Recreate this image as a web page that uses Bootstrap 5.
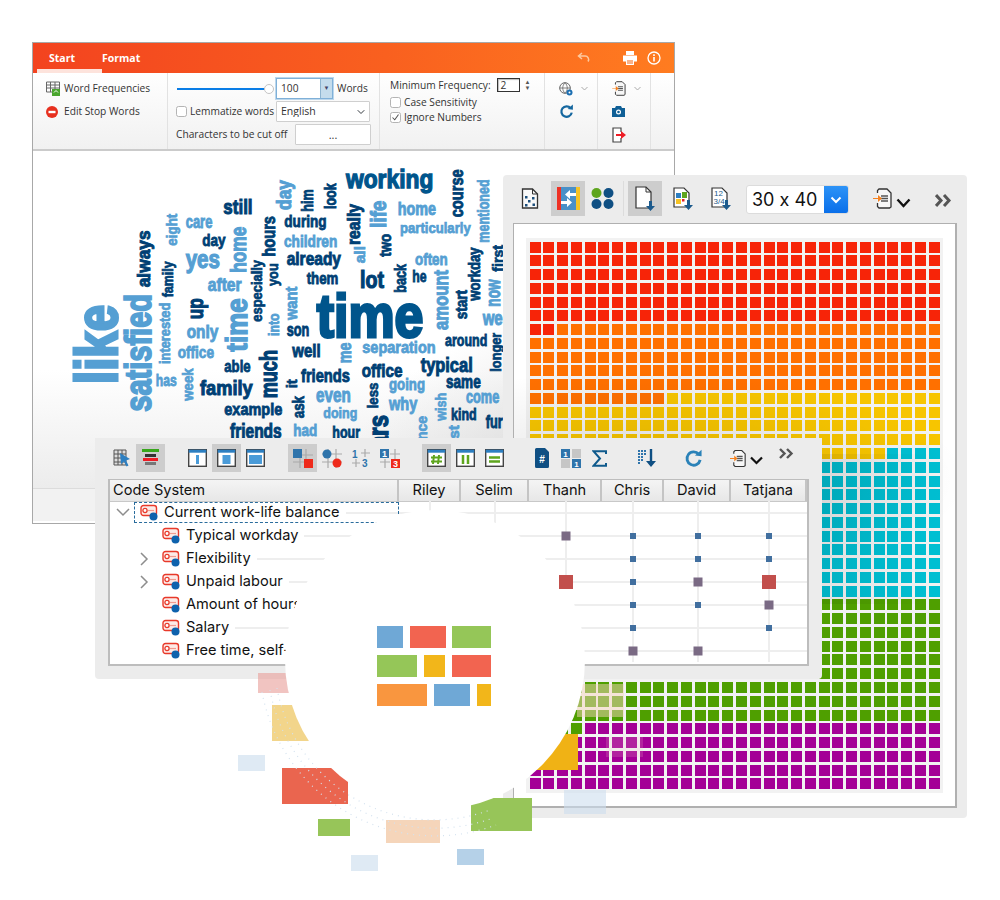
<!doctype html>
<html lang="en">
<head>
    <meta charset="utf-8">
    <meta name="viewport" content="width=device-width, initial-scale=1">
    <title>Word cloud, document portrait and code matrix</title>
    <link href="https://cdn.jsdelivr.net/npm/bootstrap@5.3.3/dist/css/bootstrap.min.css" rel="stylesheet">
    <style>
        body { margin: 0; background: #fff; }
        .desk { width: 1000px; height: 900px; overflow: hidden; }
        .ink-deep { color: #15679f; }
        .ink-soft { color: #2b82b8; }

        /* word cloud window */
        .win-cloud { left: 32px; top: 42px; width: 643px; height: 482px; border: 1px solid #a8a8a8; background: #fff; font: 10.2px/1.2 "Open Sans", sans-serif; color: #333; white-space: nowrap; }
        .title-strip { height: 30px; background: linear-gradient(90deg, #f3431f, #f9601f 55%, #ff7c20); padding-left: 16px; color: #fff; font-weight: 700; font-size: 10.5px; }
        .title-tab { position: relative; width: 53px; }
        .title-tab.on::after { content: ""; position: absolute; left: -12px; right: 0; bottom: 0; height: 4px; background: #fde3dc; }
        .title-tools { gap: 10px; padding-right: 13px; }
        .undo-ico { margin-right: 22px; }
        .ribbon { height: 78px; background: linear-gradient(#fff, #f1f1f1); border-bottom: 2px solid #cbcbcb; }
        .rb-group { border-right: 1px solid #e2e2e2; padding-top: 4px; flex: none; }
        .rb-a { width: 135px; padding-left: 13px; }
        .rb-b { width: 212px; padding-left: 8px; }
        .rb-c { width: 165px; padding-left: 10px; padding-top: 3px; }
        .rb-d { width: 53px; padding-left: 14px; }
        .rb-e { width: 53px; padding-left: 14px; }
        .rb-row { height: 23px; }
        .rb-row-t { height: 18px; }
        .rb-row-m { height: 16px; }
        .rb-row-s { height: 15px; }
        .slider-box { width: 100px; position: relative; height: 10px; }
        .slider-fill { position: absolute; left: 1px; top: 4px; width: 88px; height: 2px; background: #0a7de6; }
        .slider-knob { position: absolute; left: 88px; top: 0; width: 10px; height: 10px; border-radius: 50%; background: #fff; border: 1px solid #c4c4c4; }
        .num-box { width: 57px; height: 21px; border: 1px solid #7fb0d8; box-shadow: 0 0 0 1px #bcd7ec; padding-left: 4px; background: #fff; }
        .num-drop { width: 12px; height: 19px; background: #c4dcec; border-left: 1px solid #8db4d0; font-size: 6px; color: #446; }
        .plain-select { width: 94px; height: 21px; min-height: 0; font-size: 10.5px; line-height: 1; padding: 0 4px; border: 1px solid #cfcfcf; border-radius: 1px; background-position: right 4px center; background-size: 8px 8px; color: #333; }
        .plain-btn { width: 76px; height: 21px; border: 1px solid #cfcfcf; background: #fff; font-size: 11px; padding: 0; border-radius: 1px; color: #333; }
        .lbl-wide { width: 100px; }
        .lbl-chars { width: 119px; }
        .mini-check { width: 11px; height: 11px; margin: 0 3px 0 0 !important; border: 1px solid #b4b4b4; border-radius: 1px; flex: none; }
        .mini-check:checked { background-color: #fff; border-color: #b4b4b4; background-image: url("data:image/svg+xml,%3csvg xmlns='http://www.w3.org/2000/svg' viewBox='0 0 12 12'%3e%3cpath fill='none' stroke='%23555' stroke-width='1.4' d='M2 6l3 3 5-7'/%3e%3c/svg%3e"); }
        .freq-box { width: 23px; height: 14px; border: 1px solid #333; box-shadow: inset 1px 1px 1px #bbb; background: #fff; padding-left: 3px; line-height: 12px; margin-left: 6px; }
        .spin-arrows { font-size: 6px; line-height: 6px; margin-left: 5px; color: #555; }
        .cloud-area { height: 337px; background: radial-gradient(ellipse 330px 190px at 100% 100%, #cfcfcf, rgba(255,255,255,0)), linear-gradient(#fff 65%, #ececec 100%); }
        .cloud-foot { height: 33px; background: #f2f2f2; border-top: 1px solid #dcdcdc; }
        .w-n { fill: #003f74; stroke: #003f74; }
        .w-m { fill: #00558c; stroke: #00558c; }
        .w-l { fill: #559fd3; stroke: #559fd3; }
        .cloud-word { font-family: "Liberation Sans Narrow", "Liberation Sans", sans-serif; font-weight: 700; }

        /* portrait window */
        .win-portrait { left: 503px; top: 175px; width: 464px; height: 643px; background: #ececec; border-radius: 4px; }
        .pt-bar { height: 48px; padding: 6px 0 0 10px; }
        .pt-slot { width: 34px; height: 35px; flex: none; }
        .tile-on { background: #cdcdcd; }
        .pt-sep { width: 1px; height: 35px; background: #dcdcdc; }
        .size-pick { width: 103px; height: 29px; flex: none; background: #fff; border: 1px solid #dcdcdc; border-radius: 3px; overflow: hidden; font: 18px/1 Inter, sans-serif; font-feature-settings: "calt" 0; color: #111; white-space: nowrap; }
        .size-val { flex: 1; padding-left: 5px; }
        .size-btn { width: 24px; height: 100%; flex: none; background: linear-gradient(#2d93f7, #0a6fe9); }
        .pt-frame { position: relative; margin: 0 10px; height: 585px; background: #fff; border: 1px solid #b0b0b0; border-width: 1px 2px 2px 1px; padding: 14px 0 0 12px; }
        .cell-grid { display: grid; grid-template-columns: repeat(30, 11px); grid-auto-rows: 11px; gap: 2.77px; padding: 3.5px; width: max-content; background: #f2f2f2; }
        .c-red { background: #f72408; }
        .c-ora { background: #ff7000; }
        .c-yel { background: #f7c500; }
        .c-cya { background: #00bfd2; }
        .c-gre { background: #4f9f00; }
        .c-pur { background: #a40096; }
        .grid-shade { position: absolute; left: 0; top: 130px; width: 100%; height: 340px; pointer-events: none; background: radial-gradient(ellipse 330px 110px at 28% 37%, rgba(0,0,0,.11), rgba(0,0,0,0)), linear-gradient(90deg, rgba(0,0,0,.07) 70%, rgba(0,0,0,0) 95%) 0 100px / 100% 150px no-repeat; }

        /* matrix window */
        .win-matrix { left: 95px; top: 438px; width: 727px; height: 241px; background: #ececec; border-radius: 0 0 4px 4px; font-family: Inter, sans-serif; color: #111; }
        .mx-bar { height: 41px; padding: 6px 0 0 12px; column-gap: 18px; }
        .mx-slot { width: 29px; height: 28px; flex: none; }
        .mx-table { margin-left: 13px; width: 701px; height: 187px; background: #fff; border: 2px solid #bdbdbd; border-top-width: 1px; }
        .mx-head { height: 22px; background: linear-gradient(#f4f4f4, #e7e7e7); border-bottom: 1px solid #c8c8c8; font-size: 14.6px; line-height: 21px; }
        .mx-cols { display: grid; grid-template-columns: 289px 62px 68px 73px 62px 67px 76px; }
        .mx-head > div { border-right: 2px solid #c4c4c4; text-align: center; }
        .mx-head > div:first-child { text-align: left; padding-left: 3px; }
        .mx-body { margin-top: -1px; }
        .mx-row { height: 23px; font-size: 14.6px; }
        .mx-name { height: 23px; min-width: 0; }
        .mx-name.picked::after { content: ""; position: absolute; left: 24px; right: 0; top: 1px; bottom: 1px; border: 1px dashed #2a6c9c; }
        .mx-rule { flex: 1; height: 2px; background: #eee; margin-left: 6px; }
        .mx-cell { position: relative; }
        .mx-cell::before { content: ""; position: absolute; left: 0; right: 0; top: 11px; height: 2px; background: #eee; }
        .mx-cell::after { content: ""; position: absolute; top: 0; bottom: 0; left: 50%; width: 2px; margin-left: -1px; background: #eee; }
        .mk { position: absolute; left: 50%; top: 12px; transform: translate(-50%, -50%); z-index: 1; }
        .mk-s { width: 6px; height: 6px; background: #416f9f; }
        .mk-g { width: 9px; height: 9px; background: #7a6a84; }
        .mk-r { width: 14px; height: 14px; background: #c24f4c; }
        .tree-gap-0 { width: 30px; flex: none; justify-content: center; padding-right: 4px; }
        .tree-gap-1 { width: 52px; flex: none; justify-content: flex-end; padding-right: 13px; }
        .tree-ico { width: 18px; height: 17px; margin-right: 6px; flex: none; }

        /* drifting pieces and the lens */
        .chip { position: absolute; }
        .chip-pink { left: 258px; top: 673px; width: 50px; height: 20px; background: rgba(233, 165, 160, .65); }
        .chip-sand { left: 272px; top: 705px; width: 50px; height: 36px; background: #f2d58b; }
        .chip-mist1 { left: 238px; top: 755px; width: 27px; height: 16px; background: #dfeaf4; }
        .chip-red { left: 282px; top: 768px; width: 66px; height: 36px; background: #ea654f; }
        .chip-leaf1 { left: 318px; top: 819px; width: 32px; height: 17px; background: #97c559; }
        .chip-peach { left: 386px; top: 820px; width: 54px; height: 23px; background: #f5d5ba; }
        .chip-leaf2 { left: 471px; top: 798px; width: 61px; height: 33px; background: #97c559; }
        .chip-mist2 { left: 351px; top: 855px; width: 27px; height: 16px; background: #dfeaf4; }
        .chip-sky { left: 457px; top: 849px; width: 27px; height: 16px; background: #b5d1e8; }
        .chip-gold { left: 530px; top: 734px; width: 48px; height: 36px; background: #f0b215; }
        .chip-glow { left: 577px; top: 684px; width: 47px; height: 33px; background: rgba(245, 213, 186, .5); }
        .chip-rose { left: 606px; top: 737px; width: 37px; height: 20px; background: rgba(245, 200, 200, .18); }
        .chip-mist3 { left: 564px; top: 790px; width: 42px; height: 24px; background: rgba(205, 222, 238, .6); }
        .halo { position: absolute; left: 0; top: 0; }
        .lens { position: absolute; left: 285px; top: 510px; width: 300px; height: 300px; border-radius: 50%; background: #fff; padding: 116px 0 0 92px; }
        .brick-row { width: 114px; margin-bottom: 7px; height: 22px; }
        .brick-blue { background: #6fa8d6; }
        .brick-red { background: #f26450; }
        .brick-green { background: #95c658; }
        .brick-gold { background: #f2b61a; }
        .brick-orange { background: #f9963f; }
        .b-w14 { width: 14px; }
        .b-w21 { width: 21px; }
        .b-w26 { width: 26px; }
        .b-w36 { width: 36px; }
        .b-w39 { width: 39px; }
        .b-w40 { width: 40px; }
        .b-w50 { width: 50px; }
    </style>
</head>
<body>
<svg width="0" height="0" class="position-absolute">
    <defs>
        <symbol id="i-doc" viewBox="0 0 18 21"><path d="M1.5 1h10l5 5v14h-15z" fill="#f9f9f9" stroke="#333" stroke-width="1.3"/><path d="M11.5 1v5h5" fill="none" stroke="#333"/></symbol>
        <symbol id="i-import" viewBox="0 0 19 21"><path d="M4.5 5V2.5L6 1h8l4 4v14l-1.5 1H6L4.5 18.5V15" fill="#f7f7f7" stroke="#333" stroke-width="1.3"/><path d="M8 8h7M8 10.5h7M8 13h7" stroke="#555" stroke-width="1.6"/><path d="M0 10h5V7l4 3.5-4 3.5v-3H0z" fill="#f58220"/></symbol>
        <symbol id="i-code" viewBox="0 0 18 17"><rect x="1" y="1.5" width="15.5" height="10" rx="2.5" fill="#fdeae7" stroke="#e8392a" stroke-width="1.4"/><circle cx="5" cy="6.5" r="2.1" fill="#fff" stroke="#e8392a" stroke-width="1.3"/><path d="M8 6.5h6" stroke="#f19b90" stroke-width="1.2"/><circle cx="13.5" cy="12.5" r="4" fill="#0e62ad"/></symbol>
        <symbol id="i-redo" viewBox="0 0 20 20"><path d="M15.5 5.5A7 7 0 1 0 17 11.5" fill="none" stroke="currentColor" stroke-width="3"/><path d="M11.5 6.8L18.5 7.5V.8z" fill="currentColor"/></symbol>
    </defs>
</svg>

<div class="desk position-relative">

    <!-- word cloud window -->
    <section class="win-cloud position-absolute">
        <div class="title-strip d-flex align-items-stretch">
            <div class="title-tab on d-flex align-items-center">Start</div>
            <div class="title-tab d-flex align-items-center">Format</div>
            <div class="ms-auto d-flex align-items-center title-tools">
                <svg width="14" height="14" viewBox="0 0 14 14" class="undo-ico"><path d="M5 2L1.5 5 5 8M2 5h6a3.5 3.5 0 0 1 3 5.5" fill="none" stroke="#fcc9a0" stroke-width="1.5"/></svg>
                <svg width="14" height="14" viewBox="0 0 14 14"><path d="M3 0h8v4H3zM0 4.5h14v6h-3V14H3v-3.5H0z" fill="#fff"/><path d="M4 9h6v4H4z" fill="#f9b28a"/></svg>
                <svg width="14" height="14" viewBox="0 0 14 14"><circle cx="7" cy="7" r="6" fill="none" stroke="#fff" stroke-width="1.3"/><path d="M6.2 6h1.6v4.5H6.2zM6.2 3.3h1.6v1.6H6.2z" fill="#fff"/></svg>
            </div>
        </div>
        <div class="ribbon d-flex">
            <div class="rb-group rb-a">
                <div class="rb-row d-flex align-items-center gap-1">
                    <svg width="14" height="15" viewBox="0 0 14 15"><path d="M.5 1h13v10H.5zM.5 4h13M.5 7h13M4.5 1v10M9 1v10" fill="none" stroke="#666"/><rect x="6" y="8" width="8" height="7" fill="#4aa62e"/><path d="M8 11.5l2-2 2 2" stroke="#fff" fill="none"/></svg>
                    <span>Word Frequencies</span>
                </div>
                <div class="rb-row d-flex align-items-center gap-1">
                    <svg width="14" height="12" viewBox="0 0 14 12"><circle cx="6" cy="6" r="6" fill="#e7301f"/><rect x="2.5" y="4.8" width="7" height="2.4" fill="#fff"/></svg>
                    <span>Edit Stop Words</span>
                </div>
            </div>
            <div class="rb-group rb-b">
                <div class="rb-row d-flex align-items-center">
                    <div class="slider-box"><div class="slider-fill"></div><div class="slider-knob"></div></div>
                    <div class="num-box d-flex align-items-center justify-content-between pe-0"><span>100</span><span class="num-drop d-flex align-items-center justify-content-center">▼</span></div>
                    <span class="ms-1">Words</span>
                </div>
                <div class="rb-row d-flex align-items-center">
                    <div class="lbl-wide d-flex align-items-center"><input class="form-check-input mini-check" type="checkbox"><span>Lemmatize words</span></div>
                    <select class="form-select plain-select"><option>English</option></select>
                </div>
                <div class="rb-row d-flex align-items-center">
                    <span class="lbl-chars">Characters to be cut off</span>
                    <button type="button" class="plain-btn">...</button>
                </div>
            </div>
            <div class="rb-group rb-c">
                <div class="rb-row-t d-flex align-items-center">
                    <span>Minimum Frequency:</span><span class="freq-box">2</span>
                    <span class="spin-arrows d-flex flex-column"><span>▲</span><span>▼</span></span>
                </div>
                <div class="rb-row-m d-flex align-items-center"><input class="form-check-input mini-check" type="checkbox"><span>Case Sensitivity</span></div>
                <div class="rb-row-s d-flex align-items-center"><input class="form-check-input mini-check" type="checkbox" checked><span>Ignore Numbers</span></div>
            </div>
            <div class="rb-group rb-d">
                <div class="rb-row d-flex align-items-center gap-2">
                    <svg width="14" height="14" viewBox="0 0 14 14"><circle cx="6" cy="6" r="5.3" fill="none" stroke="#666"/><path d="M.7 6h10.6M6 .7c-3 3-3 7.6 0 10.6M6 .7c3 3 3 7.6 0 10.6" fill="none" stroke="#666" stroke-width=".8"/><circle cx="10.5" cy="10.5" r="3" fill="#1c6fb2"/><circle cx="10.5" cy="10.5" r="1" fill="#fff"/></svg>
                    <svg width="7" height="5" viewBox="0 0 7 5"><path d="M.5 1l3 3 3-3" fill="none" stroke="#aaa"/></svg>
                </div>
                <div class="rb-row d-flex align-items-center"><svg width="15" height="15" class="ink-deep"><use href="#i-redo"/></svg></div>
            </div>
            <div class="rb-group rb-e">
                <div class="rb-row d-flex align-items-center gap-2">
                    <svg width="14" height="15"><use href="#i-import"/></svg>
                    <svg width="7" height="5" viewBox="0 0 7 5"><path d="M.5 1l3 3 3-3" fill="none" stroke="#aaa"/></svg>
                </div>
                <div class="rb-row d-flex align-items-center">
                    <svg width="13" height="11" viewBox="0 0 13 11"><path d="M0 2h3l1-2h5l1 2h3v9H0z" fill="#0f5f96"/><circle cx="6.5" cy="6" r="2.5" fill="#fff"/><circle cx="6.5" cy="6" r="1.3" fill="#0f5f96"/></svg>
                </div>
                <div class="rb-row d-flex align-items-center">
                    <svg width="14" height="16" viewBox="0 0 14 16"><path d="M9 5V1H1v14h8v-4" fill="#fff" stroke="#444" stroke-width="1.2"/><path d="M4 7h5V4l5 4-5 4V9H4z" fill="#ee1c25"/></svg>
                </div>
            </div>
        </div>
        <div class="cloud-area position-relative">
            <svg id="cloud" width="641" height="337" viewBox="33 151 641 337" class="d-block"></svg>
        </div>
        <div class="cloud-foot"></div>
    </section>

    <!-- portrait window -->
    <section class="win-portrait position-absolute">
        <div class="pt-bar d-flex">
            <div class="pt-slot d-flex align-items-center justify-content-center">
                <svg width="18" height="21" viewBox="0 0 18 21"><use href="#i-doc"/><path d="M4 8h2.5v2.5H4zM11 9h2.5v2.5H11zM7 12h2.5v2.5H7zM4 16h2.5v2.5H4zM11.5 15.5H14V18h-2.5z" fill="#1c4f7c"/></svg>
            </div>
            <div class="pt-slot tile-on ms-1 d-flex align-items-center justify-content-center">
                <svg width="23" height="23" viewBox="0 0 23 23"><rect width="23" height="23" fill="#4a90c8"/><rect width="4" height="23" fill="#ee3124"/><rect x="19" width="4" height="23" fill="#f6c324"/><path d="M19 6h-6V3l-5 4.5 5 4.5V9h6zM4 14h6v-3l5 4.5-5 4.5v-3H4z" fill="#fff"/></svg>
            </div>
            <div class="pt-slot d-flex align-items-center justify-content-center">
                <svg width="23" height="21" viewBox="0 0 23 21"><circle cx="5.5" cy="5" r="5" fill="#5ea51e"/><circle cx="17.5" cy="5" r="5" fill="#0f4f83"/><circle cx="5.5" cy="16" r="5" fill="#0f4f83"/><circle cx="17.5" cy="16" r="5" fill="#0f4f83"/></svg>
            </div>
            <div class="pt-sep ms-1"></div>
            <div class="pt-slot tile-on ms-1 d-flex align-items-center justify-content-center">
                <svg width="20" height="25" viewBox="0 0 20 25"><path d="M1 1h10l5 5v16H1z" fill="#fff" stroke="#333" stroke-width="1.2"/><path d="M11 1v5h5" fill="none" stroke="#333"/><path d="M14 15h3v5h3l-4.5 5-4.5-5h3z" fill="#1c5a8c"/></svg>
            </div>
            <div class="pt-slot ms-1 d-flex align-items-center justify-content-center">
                <svg width="20" height="23" viewBox="0 0 20 23"><path d="M1 1h10l5 5v14H1z" fill="#fff" stroke="#333" stroke-width="1.2"/><rect x="3" y="6" width="5" height="5" fill="#2d7fc1"/><rect x="9" y="5" width="5" height="6" fill="#5ea51e"/><rect x="3" y="12" width="5" height="5" fill="#f6c324"/><rect x="9" y="12" width="2.5" height="2.5" fill="#e31e24"/><path d="M14 13h3v5h3l-4.5 5-4.5-5h3z" fill="#1c5a8c"/></svg>
            </div>
            <div class="pt-slot ms-1 d-flex align-items-center justify-content-center">
                <svg width="20" height="23" viewBox="0 0 20 23"><path d="M1 1h10l5 5v14H1z" fill="#fff" stroke="#333" stroke-width="1.2"/><text x="3" y="9" font-size="8" font-family="Liberation Sans" fill="#1c5a8c">12</text><text x="2.5" y="17" font-size="8" font-family="Liberation Sans" fill="#1c5a8c">3/4</text><path d="M14 13h3v5h3l-4.5 5-4.5-5h3z" fill="#1c5a8c"/></svg>
            </div>
            <div class="size-pick ms-2 mt-1 d-flex align-items-center">
                <span class="size-val">30 x 40</span>
                <span class="size-btn d-flex align-items-center justify-content-center"><svg width="12" height="8" viewBox="0 0 12 8"><path d="M1.5 1.5L6 6l4.5-4.5" fill="none" stroke="#fff" stroke-width="2"/></svg></span>
            </div>
            <div class="ms-4 d-flex align-items-center align-self-start pt-slot w-auto">
                <svg width="19" height="21"><use href="#i-import"/></svg>
                <svg class="ms-1 mt-2" width="15" height="10" viewBox="0 0 15 10"><path d="M1.5 1.5L7.5 8l6-6.5" fill="none" stroke="#111" stroke-width="2.4"/></svg>
                <svg class="ms-4 mt-1" width="18" height="13" viewBox="0 0 18 13"><path d="M1 1l5 5.500L1 12M9 1l5 5.500L9 12" fill="none" stroke="#555" stroke-width="3"/></svg>
            </div>
        </div>
        <div class="pt-frame">
            <div class="cell-grid" id="cells"></div>
            <div class="grid-shade"></div>
        </div>
    </section>

    <!-- code matrix window -->
    <section class="win-matrix position-absolute">
        <div class="mx-bar d-flex">
            <div class="d-flex">
                <div class="mx-slot d-flex align-items-center justify-content-center">
                    <svg width="18" height="18" viewBox="0 0 18 18"><path d="M1 1h12v15H1zM1 5h12M1 9h12M1 13h12M5 1v15M9 1v15" fill="#ddd" stroke="#555"/><path d="M7 4l10 6-4 1.5 2.5 5-2 1-2.5-5L8 15z" fill="#2d7fc1"/></svg>
                </div>
                <div class="mx-slot tile-on d-flex align-items-center justify-content-center">
                    <svg width="17" height="18" viewBox="0 0 17 18"><rect width="17" height="3" fill="#37a61b"/><rect x="3" y="5" width="11" height="3" fill="#333"/><rect x="1" y="9" width="15" height="3" fill="#ee1c25"/><rect x="3" y="13" width="11" height="3" fill="#777"/></svg>
                </div>
            </div>
            <div class="d-flex">
                <div class="mx-slot d-flex align-items-center justify-content-center"><svg width="19" height="18" viewBox="0 0 19 18"><rect x=".7" y=".7" width="17.6" height="16.6" fill="#fff" stroke="#444" stroke-width="1.4"/><rect x=".7" y=".7" width="17.6" height="3" fill="#2d7fc1"/><rect x="8" y="6" width="3" height="9" fill="#4a9bd8"/></svg></div>
                <div class="mx-slot tile-on d-flex align-items-center justify-content-center"><svg width="19" height="18" viewBox="0 0 19 18"><rect x=".7" y=".7" width="17.6" height="16.6" fill="#fff" stroke="#444" stroke-width="1.4"/><rect x=".7" y=".7" width="17.6" height="3" fill="#2d7fc1"/><rect x="5.5" y="6" width="8" height="9" fill="#4a9bd8"/></svg></div>
                <div class="mx-slot d-flex align-items-center justify-content-center"><svg width="19" height="18" viewBox="0 0 19 18"><rect x=".7" y=".7" width="17.6" height="16.6" fill="#fff" stroke="#444" stroke-width="1.4"/><rect x=".7" y=".7" width="17.6" height="3" fill="#2d7fc1"/><rect x="3" y="6" width="13" height="9" fill="#4a9bd8"/></svg></div>
            </div>
            <div class="d-flex">
                <div class="mx-slot tile-on d-flex align-items-center justify-content-center"><svg width="20" height="19" viewBox="0 0 20 19"><path d="M0 6h20M0 13h20M7 0v19M13 0v19" stroke="#aaa" stroke-width="1.2"/><rect width="9" height="9" fill="#2f74ab"/><rect x="11" y="10" width="9" height="9" fill="#ee2a1b"/></svg></div>
                <div class="mx-slot d-flex align-items-center justify-content-center"><svg width="20" height="19" viewBox="0 0 20 19"><path d="M0 5h20M0 13h20M6 0v19M14 0v19" stroke="#aaa" stroke-width="1.2"/><circle cx="5" cy="5" r="4.5" fill="#2f74ab"/><circle cx="15" cy="14" r="4.5" fill="#ee2a1b"/></svg></div>
                <div class="mx-slot d-flex align-items-center justify-content-center"><svg width="18" height="19" viewBox="0 0 18 19" font-family="Liberation Sans" font-weight="700" font-size="10" fill="#2f74ab"><path d="M0 14h8M4 10v8M9 4h9M13 0v8" stroke="#aaa" stroke-width="1.2"/><text x="0" y="9">1</text><text x="10" y="18">3</text></svg></div>
                <div class="mx-slot d-flex align-items-center justify-content-center"><svg width="20" height="19" viewBox="0 0 20 19" font-family="Liberation Sans" font-weight="700" font-size="9" fill="#fff"><path d="M0 13h10M5 10v9M10 5h10M15 0v10" stroke="#aaa" stroke-width="1.2"/><rect width="9" height="9" fill="#2f74ab"/><rect x="11" y="10" width="9" height="9" fill="#ee2a1b"/><text x="2" y="8">1</text><text x="13" y="18">3</text></svg></div>
            </div>
            <div class="d-flex">
                <div class="mx-slot tile-on d-flex align-items-center justify-content-center"><svg width="19" height="18" viewBox="0 0 19 18"><rect x=".7" y=".7" width="17.6" height="16.6" fill="#fff" stroke="#444" stroke-width="1.4"/><rect x=".7" y=".7" width="17.6" height="3" fill="#2d7fc1"/><path d="M7 6l-1 9M12 6l-1 9M4 8.5h11M4 12.5h11" stroke="#5ea51e" stroke-width="2"/></svg></div>
                <div class="mx-slot d-flex align-items-center justify-content-center"><svg width="19" height="18" viewBox="0 0 19 18"><rect x=".7" y=".7" width="17.6" height="16.6" fill="#fff" stroke="#444" stroke-width="1.4"/><rect x=".7" y=".7" width="17.6" height="3" fill="#2d7fc1"/><path d="M7 6v9M12 6v9" stroke="#5ea51e" stroke-width="2.5"/></svg></div>
                <div class="mx-slot d-flex align-items-center justify-content-center"><svg width="19" height="18" viewBox="0 0 19 18"><rect x=".7" y=".7" width="17.6" height="16.6" fill="#fff" stroke="#444" stroke-width="1.4"/><rect x=".7" y=".7" width="17.6" height="3" fill="#2d7fc1"/><path d="M4 8.5h11M4 12.5h11" stroke="#5ea51e" stroke-width="2.5"/></svg></div>
            </div>
            <div class="d-flex">
                <div class="mx-slot d-flex align-items-center justify-content-center"><svg width="14" height="20" viewBox="0 0 14 20"><path d="M0 1.5A1.5 1.5 0 0 1 1.5 0H10l4 4v14.5a1.5 1.5 0 0 1-1.5 1.5h-11A1.5 1.5 0 0 1 0 18.5z" fill="#0f4f83"/><text x="7" y="15" text-anchor="middle" font-size="10" font-weight="700" font-family="Liberation Sans" fill="#fff">#</text></svg></div>
                <div class="mx-slot d-flex align-items-center justify-content-center"><svg width="20" height="19" viewBox="0 0 20 19" font-size="8" font-weight="700" font-family="Liberation Sans" fill="#fff" text-anchor="middle"><rect width="9" height="9" fill="#2f74ab"/><rect x="11" width="9" height="9" fill="#c6c6c6"/><rect y="10" width="9" height="9" fill="#c6c6c6"/><rect x="11" y="10" width="9" height="9" fill="#2f74ab"/><text x="4.5" y="7.5">1</text><text x="15.5" y="17.5">1</text></svg></div>
                <div class="mx-slot d-flex align-items-center justify-content-center"><svg width="15" height="17" viewBox="0 0 15 17"><path d="M14 4V1.200H1.500L8 8.500 1.500 15.800H14V13" fill="none" stroke="#0f5a8c" stroke-width="2"/></svg></div>
            </div>
            <div class="d-flex">
                <div class="mx-slot d-flex align-items-center justify-content-center"><svg width="19" height="18" viewBox="0 0 19 18"><path d="M1 1h2v2H1zM4 1h2v2H4zM7 1h2v2H7zM1 4h2v2H1zM4 4h2v2H4zM7 4h2v2H7zM1 7h2v2H1zM4 7h2v2H4zM1 10h2v2H1zM4 10h2v2H4zM1 13h2v2H1z" fill="#2f74ab"/><path d="M12.800 0h2.400v12H19l-5 6-5-6h3.800z" fill="#0f4f83"/></svg></div>
            </div>
            <div class="d-flex">
                <div class="mx-slot d-flex align-items-center justify-content-center"><svg width="19" height="19" class="ink-soft"><use href="#i-redo"/></svg></div>
            </div>
            <div class="d-flex ms-1 align-items-start">
                <div class="d-flex align-items-center mx-slot w-auto">
                    <svg width="16" height="19"><use href="#i-import"/></svg>
                    <svg class="ms-1 mt-1" width="13" height="9" viewBox="0 0 13 9"><path d="M1 1.500l5.500 5.500 5.500-5.500" fill="none" stroke="#111" stroke-width="2.2"/></svg>
                </div>
                <svg class="ms-3 mt-1" width="15" height="11" viewBox="0 0 15 11"><path d="M1 1l4.500 4.500L1 10M8 1l4.500 4.500L8 10" fill="none" stroke="#555" stroke-width="2.4"/></svg>
            </div>
        </div>
        <div class="mx-table">
            <div class="mx-head mx-cols">
                <div>Code System</div><div>Riley</div><div>Selim</div><div>Thanh</div><div>Chris</div><div>David</div><div>Tatjana</div>
            </div>
            <div id="matrix" class="mx-body"></div>
        </div>
    </section>

    <!-- drifting pieces -->
    <div class="chip chip-pink"></div>
    <div class="chip chip-sand"></div>
    <div class="chip chip-mist1"></div>
    <div class="chip chip-red"></div>
    <div class="chip chip-leaf1"></div>
    <div class="chip chip-peach"></div>
    <div class="chip chip-leaf2"></div>
    <div class="chip chip-mist2"></div>
    <div class="chip chip-sky"></div>
    <div class="chip chip-gold"></div>
    <div class="chip chip-glow"></div>
    <div class="chip chip-rose"></div>
    <div class="chip chip-mist3"></div>
    <svg class="halo" width="1000" height="900" fill="none" stroke="#d4e2ef" stroke-width="1.2" stroke-dasharray="1 5">
        <path d="M277 688A160 160 0 0 0 490 810"/>
        <path d="M270 690A168 168 0 0 0 493 818"/>
        <path d="M262 692A176 176 0 0 0 496 825"/>
    </svg>
    <div class="lens">
        <div class="brick-row d-flex justify-content-between"><div class="brick-blue b-w26"></div><div class="brick-red b-w36"></div><div class="brick-green b-w39"></div></div>
        <div class="brick-row d-flex justify-content-between"><div class="brick-green b-w40"></div><div class="brick-gold b-w21"></div><div class="brick-red b-w39"></div></div>
        <div class="brick-row d-flex justify-content-between"><div class="brick-orange b-w50"></div><div class="brick-blue b-w36"></div><div class="brick-gold b-w14"></div></div>
    </div>
</div>

<script src="https://cdn.jsdelivr.net/npm/bootstrap@5.3.3/dist/js/bootstrap.bundle.min.js"></script>
<script>
    // document portrait: 30 x 40 tiles, colour runs by tile index
    const runs = [[182, 'c-red'], [340, 'c-ora'], [476, 'c-yel'], [780, 'c-cya'], [1054, 'c-gre'], [1200, 'c-pur']];
    const cells = document.getElementById('cells');
    let run = 0;
    for (let i = 0; i < 1200; i++) {
        if (i >= runs[run][0]) run++;
        const cell = document.createElement('div');
        cell.className = runs[run][1];
        cells.appendChild(cell);
    }

    // word cloud: [word, rotated, x, y, length, font size, colour], page coordinates of the baseline start
    const words = [
        ['like',1,116.7,384,79,60,'l'],['satisfied',1,150.7,411.7,117.7,37,'l'],['always',1,150,287.3,57,19,'n'],
        ['family',1,173,297.3,36,14,'n'],['eight',1,176.7,245.7,32,14,'l'],['care',0,185.7,227.7,26.7,18,'l'],
        ['day',0,202.3,245.7,23.3,17,'n'],['still',0,223.3,214.3,29.3,21,'n'],['yes',0,185.7,268.3,34.3,25,'l'],
        ['home',1,246,272.7,46,22,'l'],['hours',1,275,256.7,40.7,18,'n'],['after',0,207.7,291,34,18,'l'],
        ['especially',1,261.7,321.7,61.7,14,'n'],['you',1,278,286,22.7,15,'n'],['up',1,203.3,319.3,21,22,'n'],
        ['time',1,247.3,351.7,53.3,30,'l'],['into',1,279.3,336,22.7,15,'l'],['interested',1,170,364,61.3,15,'l'],
        ['only',0,186.7,338.3,31.7,18,'l'],['office',0,177.7,358.3,36.3,17,'l'],['has',0,155.7,386,21,17,'l'],
        ['week',1,193.3,400.7,32.3,15,'l'],['able',0,224.3,371.7,26.3,16,'n'],['family',0,200,395,52.7,21,'n'],
        ['much',1,276.7,398.3,48.3,23,'n'],['it',1,296.7,388.3,9,15,'n'],['example',0,224.3,415,58,17,'n'],
        ['friends',0,230,437.7,51.7,20,'n'],['day',1,291,210,30,20,'l'],['him',1,313,211.7,22.3,16,'n'],
        ['look',1,335.7,209,25.7,16,'n'],['working',0,346,188.3,87.3,26,'m'],['course',1,463.3,217.3,48,18,'n'],
        ['mentioned',1,489.3,242.7,63.3,16,'l'],['really',1,360,245,41,18,'n'],['life',1,386,227.7,27,22,'l'],
        ['home',0,397.7,215,38.3,18,'l'],['particularly',0,400,233.3,70.7,15,'l'],['during',0,284.3,226.7,42.3,16,'n'],
        ['children',0,284,247,53.3,17,'l'],['already',0,286.7,265,54.3,18,'n'],['two',1,390.7,256.7,22.7,16,'n'],
        ['all',1,365,263.3,17.3,14,'l'],['often',0,415,265,32.7,17,'l'],['them',0,306.7,284,31.7,17,'n'],
        ['lot',0,360,287.7,24,24,'n'],['back',1,405.7,292.7,28.7,16,'n'],['he',0,412.3,282,14.3,16,'n'],
        ['workday',1,480,300.7,53.3,16,'n'],['first',1,503,271.7,26.7,14,'n'],['now',1,500,306.7,27.3,21,'l'],
        ['amount',1,447.7,330,60,21,'l'],['start',1,466.7,319.3,29.3,16,'n'],['want',1,297.3,320,33.3,17,'l'],
        ['time',0,316.7,336.7,106.7,62,'m'],['son',0,286.7,336.3,22.7,19,'n'],['we',0,482.7,325,20,21,'l'],
        ['around',0,445,345.7,42.3,16,'n'],['longer',1,501,371.7,39,14,'n'],['well',0,292.3,356.7,28.3,18,'n'],
        ['me',1,350.7,363.3,20.7,19,'l'],['separation',0,362.3,353.3,73.3,16,'l'],['office',0,361.7,376.7,40.7,19,'n'],
        ['typical',0,420.7,372.3,52,20,'n'],['friends',0,301,382,49,18,'n'],['going',0,389,390,36,17,'l'],
        ['same',0,446,388,34.7,19,'n'],['less',1,378,408.3,25.7,15,'n'],['even',0,316,402,34.7,20,'l'],
        ['ask',1,304,418.3,22.3,16,'n'],['come',0,466,403,33.3,18,'l'],['why',0,389,410,28.3,19,'l'],
        ['wish',1,445.7,420.7,28,15,'l'],['kind',0,451,420,25.7,17,'n'],['fur',0,485.7,428,17,18,'n'],
        ['doing',0,323.3,418,34,15,'l'],['had',0,293.3,435.5,24,17,'l'],['hour',0,332.3,438,27.7,16,'n'],
        ['years',1,388,473,58,28,'n'],['balance',1,426.5,468,52,15,'l'],['exist',1,459,460,35,15,'l']
    ];
    const cloud = document.getElementById('cloud');
    words.forEach(([text, rot, x, y, len, size, tone]) => {
        const t = document.createElementNS('http://www.w3.org/2000/svg', 'text');
        t.textContent = text;
        t.setAttribute('class', 'cloud-word w-' + tone);
        t.setAttribute('x', x);
        t.setAttribute('y', y);
        t.setAttribute('font-size', size);
        t.setAttribute('stroke-width', (size * 0.05).toFixed(2));
        t.setAttribute('textLength', len);
        t.setAttribute('lengthAdjust', 'spacingAndGlyphs');
        if (rot) t.setAttribute('transform', `rotate(-90 ${x} ${y})`);
        cloud.appendChild(t);
    });

    // code matrix: marks per column Riley..Tatjana (s small, g grey, r red)
    const rows = [
        ['Current work-life balance', 0, 'down', '', '', '', '', '', ''],
        ['Typical workday', 1, '', '', '', 'g', 's', 's', 's'],
        ['Flexibility', 1, 'right', '', '', '', 's', 's', 's'],
        ['Unpaid labour', 1, 'right', '', '', 'r', 's', 'g', 'r'],
        ['Amount of hours', 1, '', '', '', '', 's', 's', 'g'],
        ['Salary', 1, '', '', '', '', 's', '', 's'],
        ['Free time, self-care', 1, '', '', '', '', 'g', 'g', '']
    ];
    const carets = {
        down: '<svg width="14" height="9" viewBox="0 0 14 9"><path d="M1 1l6 6 6-6" fill="none" stroke="#8d8d8d" stroke-width="1.5"/></svg>',
        right: '<svg width="9" height="14" viewBox="0 0 9 14"><path d="M1 1l6 6-6 6" fill="none" stroke="#8d8d8d" stroke-width="1.5"/></svg>'
    };
    document.getElementById('matrix').innerHTML = rows.map(([name, depth, caret, ...marks]) => `
        <div class="mx-row mx-cols">
            <div class="mx-name d-flex align-items-center position-relative">
                <span class="tree-gap-${depth} d-flex align-items-center">${carets[caret] || ''}</span>
                <svg class="tree-ico"><use href="#i-code"/></svg>
                <span class="text-nowrap">${name}</span>
                <span class="mx-rule"></span>
            </div>
            ${marks.map(m => `<div class="mx-cell">${m ? `<span class="mk mk-${m}"></span>` : ''}</div>`).join('')}
        </div>`).join('');
    document.querySelector('#matrix .mx-name').classList.add('picked');
</script>
</body>
</html>
